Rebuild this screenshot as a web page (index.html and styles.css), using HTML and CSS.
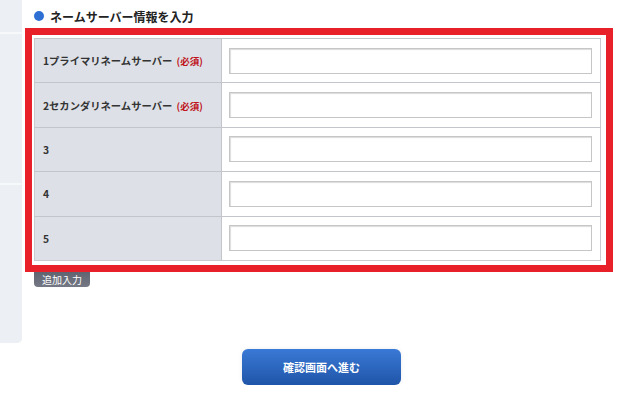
FILE: index.html
```html
<!DOCTYPE html>
<html lang="ja">
<head>
  <meta charset="UTF-8" />
  <meta name="viewport" content="width=device-width, initial-scale=1.0"/>
  <title>ネームサーバー情報を入力</title>
  <link rel="stylesheet" href="styles.css">
</head>
<body>
  <div class="page">
    <div class="sidebar">
      <div class="side-block top"></div>
      <div class="side-block middle"></div>
      <div class="side-block bottom"></div>
    </div>

    <div class="main">
      <h2 class="title"><span class="dot"></span>ネームサーバー情報を入力</h2>

      <div class="highlight">
        <table class="ns-table">
          <tr>
            <th>1プライマリネームサーバー <span class="req">(必須)</span></th>
            <td><input type="text" /></td>
          </tr>
          <tr>
            <th>2セカンダリネームサーバー <span class="req">(必須)</span></th>
            <td><input type="text" /></td>
          </tr>
          <tr>
            <th>3</th>
            <td><input type="text" /></td>
          </tr>
          <tr>
            <th>4</th>
            <td><input type="text" /></td>
          </tr>
          <tr>
            <th>5</th>
            <td><input type="text" /></td>
          </tr>
        </table>
      </div>

      <button class="add-btn">追加入力</button>
    </div>
  </div>

  <div class="actions">
    <button class="submit-btn">確認画面へ進む</button>
  </div>
</body>
</html>
```

FILE: styles.css
```css
body {
  margin: 0;
  padding: 0;
  background: #ffffff;
  font-family: "Noto Sans CJK JP", "Noto Sans", sans-serif;
  color: #222;
}

.page {
  display: flex;
  align-items: flex-start;
}

.sidebar {
  width: 22px;
  height: 343px;
  display: flex;
  flex-direction: column;
  background: #eceef2;
  border-radius: 0 0 5px 0;
  overflow: hidden;
}

.side-block {
  background: #eceff3;
}

.side-block.top {
  height: 32px;
  border-bottom: 2px solid #f7f8fa;
}

.side-block.middle {
  height: 149px;
  border-bottom: 2px solid #f7f8fa;
}

.side-block.bottom {
  flex: 1;
}

.main {
  width: 588px;
  margin-left: 3px;
}

.title {
  display: flex;
  align-items: center;
  gap: 6px;
  height: 28px;
  margin: 0;
  padding: 4px 0 0 9px;
  box-sizing: border-box;
  font-size: 12px;
  font-weight: bold;
  color: #222;
}

.dot {
  width: 10px;
  height: 10px;
  border-radius: 50%;
  background: #2e6fd3;
}

.highlight {
  border: 7px solid #e8202a;
  padding: 3px 5px 4px 2px;
}

.ns-table {
  width: 100%;
  border-collapse: collapse;
  border: 1px solid #c9cbce;
}

.ns-table th,
.ns-table td {
  height: 44.4px;
  border-top: 1px solid #c2c5ca;
  box-sizing: border-box;
}

.ns-table th {
  width: 187px;
  padding: 0 0 0 8px;
  text-align: left;
  background: #dde1e7;
  border-right: 1px solid #c2c5ca;
  font-size: 10.3px;
  font-weight: bold;
  color: #333;
}

.req {
  margin-left: 2px;
  color: #c0141c;
  font-size: 9.5px;
}

.ns-table td {
  padding: 0 8px 0 7px;
  background: #fff;
}

.ns-table input {
  display: block;
  width: 100%;
  height: 26px;
  box-sizing: border-box;
  border: 1px solid #c6c6c6;
  box-shadow: inset 1px 1px 1px #dcdcdc;
  background: #fff;
}

.add-btn {
  display: block;
  height: 15px;
  margin-left: 9px;
  padding: 0 8px;
  border: none;
  border-radius: 0 0 4px 4px;
  background: linear-gradient(#5f6470, #747985);
  color: #fff;
  font-family: inherit;
  font-size: 10px;
  line-height: 15px;
}

.actions {
  display: flex;
  justify-content: center;
  padding-left: 3px;
  margin-top: 6px;
}

.submit-btn {
  width: 159px;
  height: 36px;
  border: none;
  border-radius: 6px;
  background: linear-gradient(#3a79d6, #1f55a8);
  box-shadow: 0 0 4px rgba(0, 0, 0, 0.08);
  color: #fff;
  font-family: inherit;
  font-size: 11px;
  font-weight: bold;
}
```
